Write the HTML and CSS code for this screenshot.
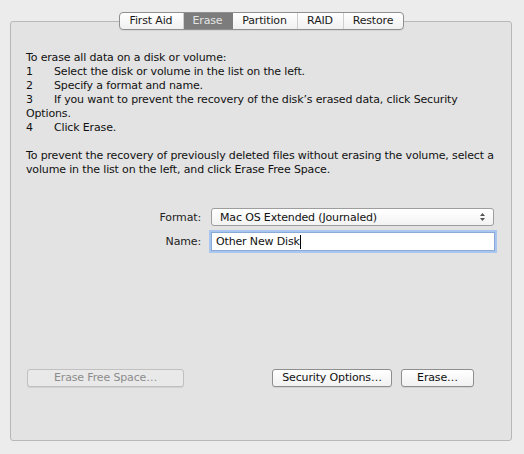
FILE: index.html
```html
<!DOCTYPE html>
<html>
<head>
<meta charset="utf-8">
<link rel="stylesheet" href="styles.css">
</head>
<body>
<div class="window">
  <div class="panel">
    <div class="tabs">
      <div class="tab t1">First Aid</div>
      <div class="tab t2 selected">Erase</div>
      <div class="tab t3">Partition</div>
      <div class="tab t4">RAID</div>
      <div class="tab t5">Restore</div>
    </div>
    <div class="info">
      <p>To erase all data on a disk or volume:</p>
      <p><span class="num">1</span>Select the disk or volume in the list on the left.</p>
      <p><span class="num">2</span>Specify a format and name.</p>
      <p><span class="num">3</span>If you want to prevent the recovery of the disk’s erased data, click Security Options.</p>
      <p><span class="num">4</span>Click Erase.</p>
      <p class="gap">To prevent the recovery of previously deleted files without erasing the volume, select a volume in the list on the left, and click Erase Free Space.</p>
    </div>
    <div class="form">
      <label class="lbl">Format:</label>
      <div class="select">
        <span>Mac OS Extended (Journaled)</span>
        <svg class="arrows" width="7" height="10" viewBox="0 0 7 10"><path d="M3.5 1 L6 4 L1 4 Z M3.5 9 L6 6 L1 6 Z" fill="#555"/></svg>
      </div>
      <label class="lbl">Name:</label>
      <div class="field"><span>Other New Disk</span><span class="caret"></span></div>
    </div>
    <div class="buttons">
      <div class="btn disabled wide">Erase Free Space…</div>
      <div class="spacer"></div>
      <div class="btn sec">Security Options…</div>
      <div class="btn erase">Erase…</div>
    </div>
  </div>
</div>
</body>
</html>
```
FILE: styles.css
```css
html, body {
  margin: 0;
  padding: 0;
  background: #ececec;
  width: 524px;
  height: 454px;
  overflow: hidden;
  font-family: "DejaVu Sans", "Noto Sans", sans-serif;
  font-size: 11px;
  letter-spacing: -0.15px;
  color: #111;
}
.window {
  padding: 21px 12px 0 10px;
}
.panel {
  height: 418px;
  border: 1px solid #b8b8b8;
  border-radius: 3px;
  background: #e3e3e3;
  display: flex;
  flex-direction: column;
}
.tabs {
  align-self: center;
  display: flex;
  margin-top: -10px;
  height: 16px;
  border: 1px solid #8f8f8f;
  border-radius: 4px;
  background: linear-gradient(#ffffff, #f0f0f0);
  overflow: hidden;
  box-shadow: 0 1px 0 rgba(0,0,0,0.06);
}
.tab {
  line-height: 16px;
  font-size: 11px;
  text-align: center;
  color: #1a1a1a;
  border-right: 1px solid #cfcfcf;
}
.t1 { width: 63px; }
.t2 { width: 48px; }
.t3 { width: 64px; }
.t4 { width: 45px; }
.t5 { width: 59px; border-right: none; }
.tab.selected {
  background: #7c7c7c;
  color: #e4e4e4;
  border-right-color: #7c7c7c;
}
.info {
  padding: 0 12px 0 15px;
  margin-top: 21px;
  line-height: 14px;
}
.info p { margin: 0; }
.info p.gap { margin-top: 14px; }
.num {
  display: inline-block;
  width: 28px;
}
.form {
  display: grid;
  grid-template-columns: 1fr 286px;
  column-gap: 9px;
  row-gap: 6px;
  padding-right: 15px;
  margin-top: 31px;
  align-items: center;
}
.lbl {
  text-align: right;
  color: #222;
}
.select {
  margin: 0 2px 0 1px;
  height: 16px;
  border: 1px solid #9d9d9d;
  border-radius: 3px;
  background: linear-gradient(#ffffff, #f3f3f3);
  display: flex;
  align-items: center;
  padding: 0 7px 0 8px;
  justify-content: space-between;
}
.arrows { display: block; }
.field {
  height: 17px;
  border: 1px solid #8aa9d6;
  box-shadow: 0 0 0 2px #a9c6ef;
  background: #fff;
  display: flex;
  align-items: center;
  padding: 0 4px;
  margin-right: 1px;
  margin-left: 1px;
}
.caret {
  display: inline-block;
  width: 1px;
  height: 14px;
  background: #000;
}
.buttons {
  margin-top: auto;
  margin-bottom: 53px;
  display: flex;
  padding: 0 37px 0 16px;
  gap: 9px;
}
.spacer { flex: 1; }
.btn {
  height: 16px;
  line-height: 16px;
  border: 1px solid #8e8e8e;
  border-radius: 3px;
  background: linear-gradient(#ffffff, #f1f1f1);
  text-align: center;
  font-size: 11px;
  box-shadow: 0 1px 0 rgba(0,0,0,0.08);
}
.btn.wide { width: 155px; }
.btn.disabled {
  color: #8c8c8c;
  border-color: #c0c0c0;
  background: #e9e9e9;
}
.btn.sec { width: 118px; }
.btn.erase { width: 71px; }
```
